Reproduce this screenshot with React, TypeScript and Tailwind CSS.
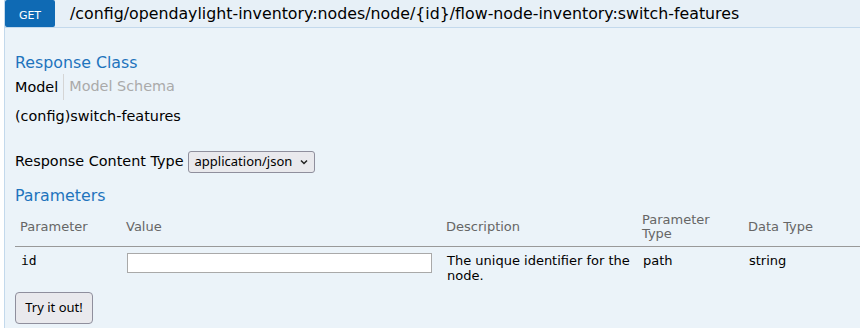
export default function App() {
  return (
    <div className="min-h-screen w-[900px] bg-white pl-[4px] font-['DejaVu_Sans',sans-serif] text-[14.4px] text-black">
      {/* Heading bar */}
      <div className="flex h-[28px] border-b border-l border-[#c3d9ec] bg-[#e7f0f7]">
        <span className="block h-[27px] w-[50px] rounded-[2px] bg-[#0f6ab4] pt-[8px] text-center text-[11px] uppercase leading-[15px] text-white">
          Get
        </span>
        <span className="ml-[15px] text-[15.8px] leading-[27px]">
          /config/opendaylight-inventory:nodes/node/{'{id}'}/flow-node-inventory:switch-features
        </span>
      </div>

      {/* Content */}
      <div className="border-l border-[#c3d9ec] bg-[#ebf3f9] px-[10px] pb-[10px]">
        <h4 className="pt-[25px] text-[15.8px] leading-[20px] text-[#1e74bd]">Response Class</h4>
        <div className="mt-[1px] flex h-[26px] items-center">
          <span className="border-r border-[#d5d5d5] pr-[5px] leading-[26px]">Model</span>
          <span className="pl-[5px] text-[#aaa]">Model Schema</span>
        </div>
        <p className="mt-[7px] leading-[18px]">(config)switch-features</p>

        <div className="mt-[26px] flex h-[22px] items-center">
          <span>Response Content Type</span>
          <span className="ml-[4px] flex h-[22px] w-[127px] items-center justify-between rounded-[3px] border border-[#8f8f9d] bg-[#e9e9ed] pl-[6px] pr-[5px] font-['Noto_Sans',sans-serif] text-[13px]">
            application/json
            <svg width="10" height="10" viewBox="0 0 10 10" fill="none" stroke="#222" strokeWidth="1.5">
              <path d="M2 3.5 L5 6.5 L8 3.5" />
            </svg>
          </span>
        </div>

        <h4 className="mt-[13px] text-[15.8px] leading-[20px] text-[#1e74bd]">Parameters</h4>

        <table className="mt-[2px] w-[880px] table-fixed border-collapse text-left text-[13px]">
          <colgroup>
            <col className="w-[106px]" />
            <col className="w-[320px]" />
            <col className="w-[196px]" />
            <col className="w-[106px]" />
            <col />
          </colgroup>
          <thead>
            <tr className="border-b border-[#999]">
              <th className="h-[38px] p-[5px] align-middle font-normal leading-[14px] text-[#666]">Parameter</th>
              <th className="p-[5px] align-middle font-normal leading-[14px] text-[#666]">Value</th>
              <th className="p-[5px] align-middle font-normal leading-[14px] text-[#666]">Description</th>
              <th className="p-[5px] align-middle font-normal leading-[14px] text-[#666]">Parameter Type</th>
              <th className="p-[5px] align-middle font-normal leading-[14px] text-[#666]">Data Type</th>
            </tr>
          </thead>
          <tbody>
            <tr>
              <td className="p-[6px] align-top font-['DejaVu_Sans_Mono',monospace] leading-[15px]">id</td>
              <td className="p-[6px] align-top">
                <input type="text" className="block h-[20px] w-[305px] border border-[#a9a9a9] bg-white" />
              </td>
              <td className="p-[6px] align-top leading-[15px]">The unique identifier for the node.</td>
              <td className="p-[6px] align-top leading-[15px]">path</td>
              <td className="p-[6px] align-top leading-[15px]">string</td>
            </tr>
          </tbody>
        </table>

        <button className="mt-[3px] h-[32px] w-[78px] rounded-[4px] border border-[#8f8f9d] bg-[#e9e9ed] font-['Noto_Sans',sans-serif] text-[13px]">
          Try it out!
        </button>
      </div>
    </div>
  )
}
